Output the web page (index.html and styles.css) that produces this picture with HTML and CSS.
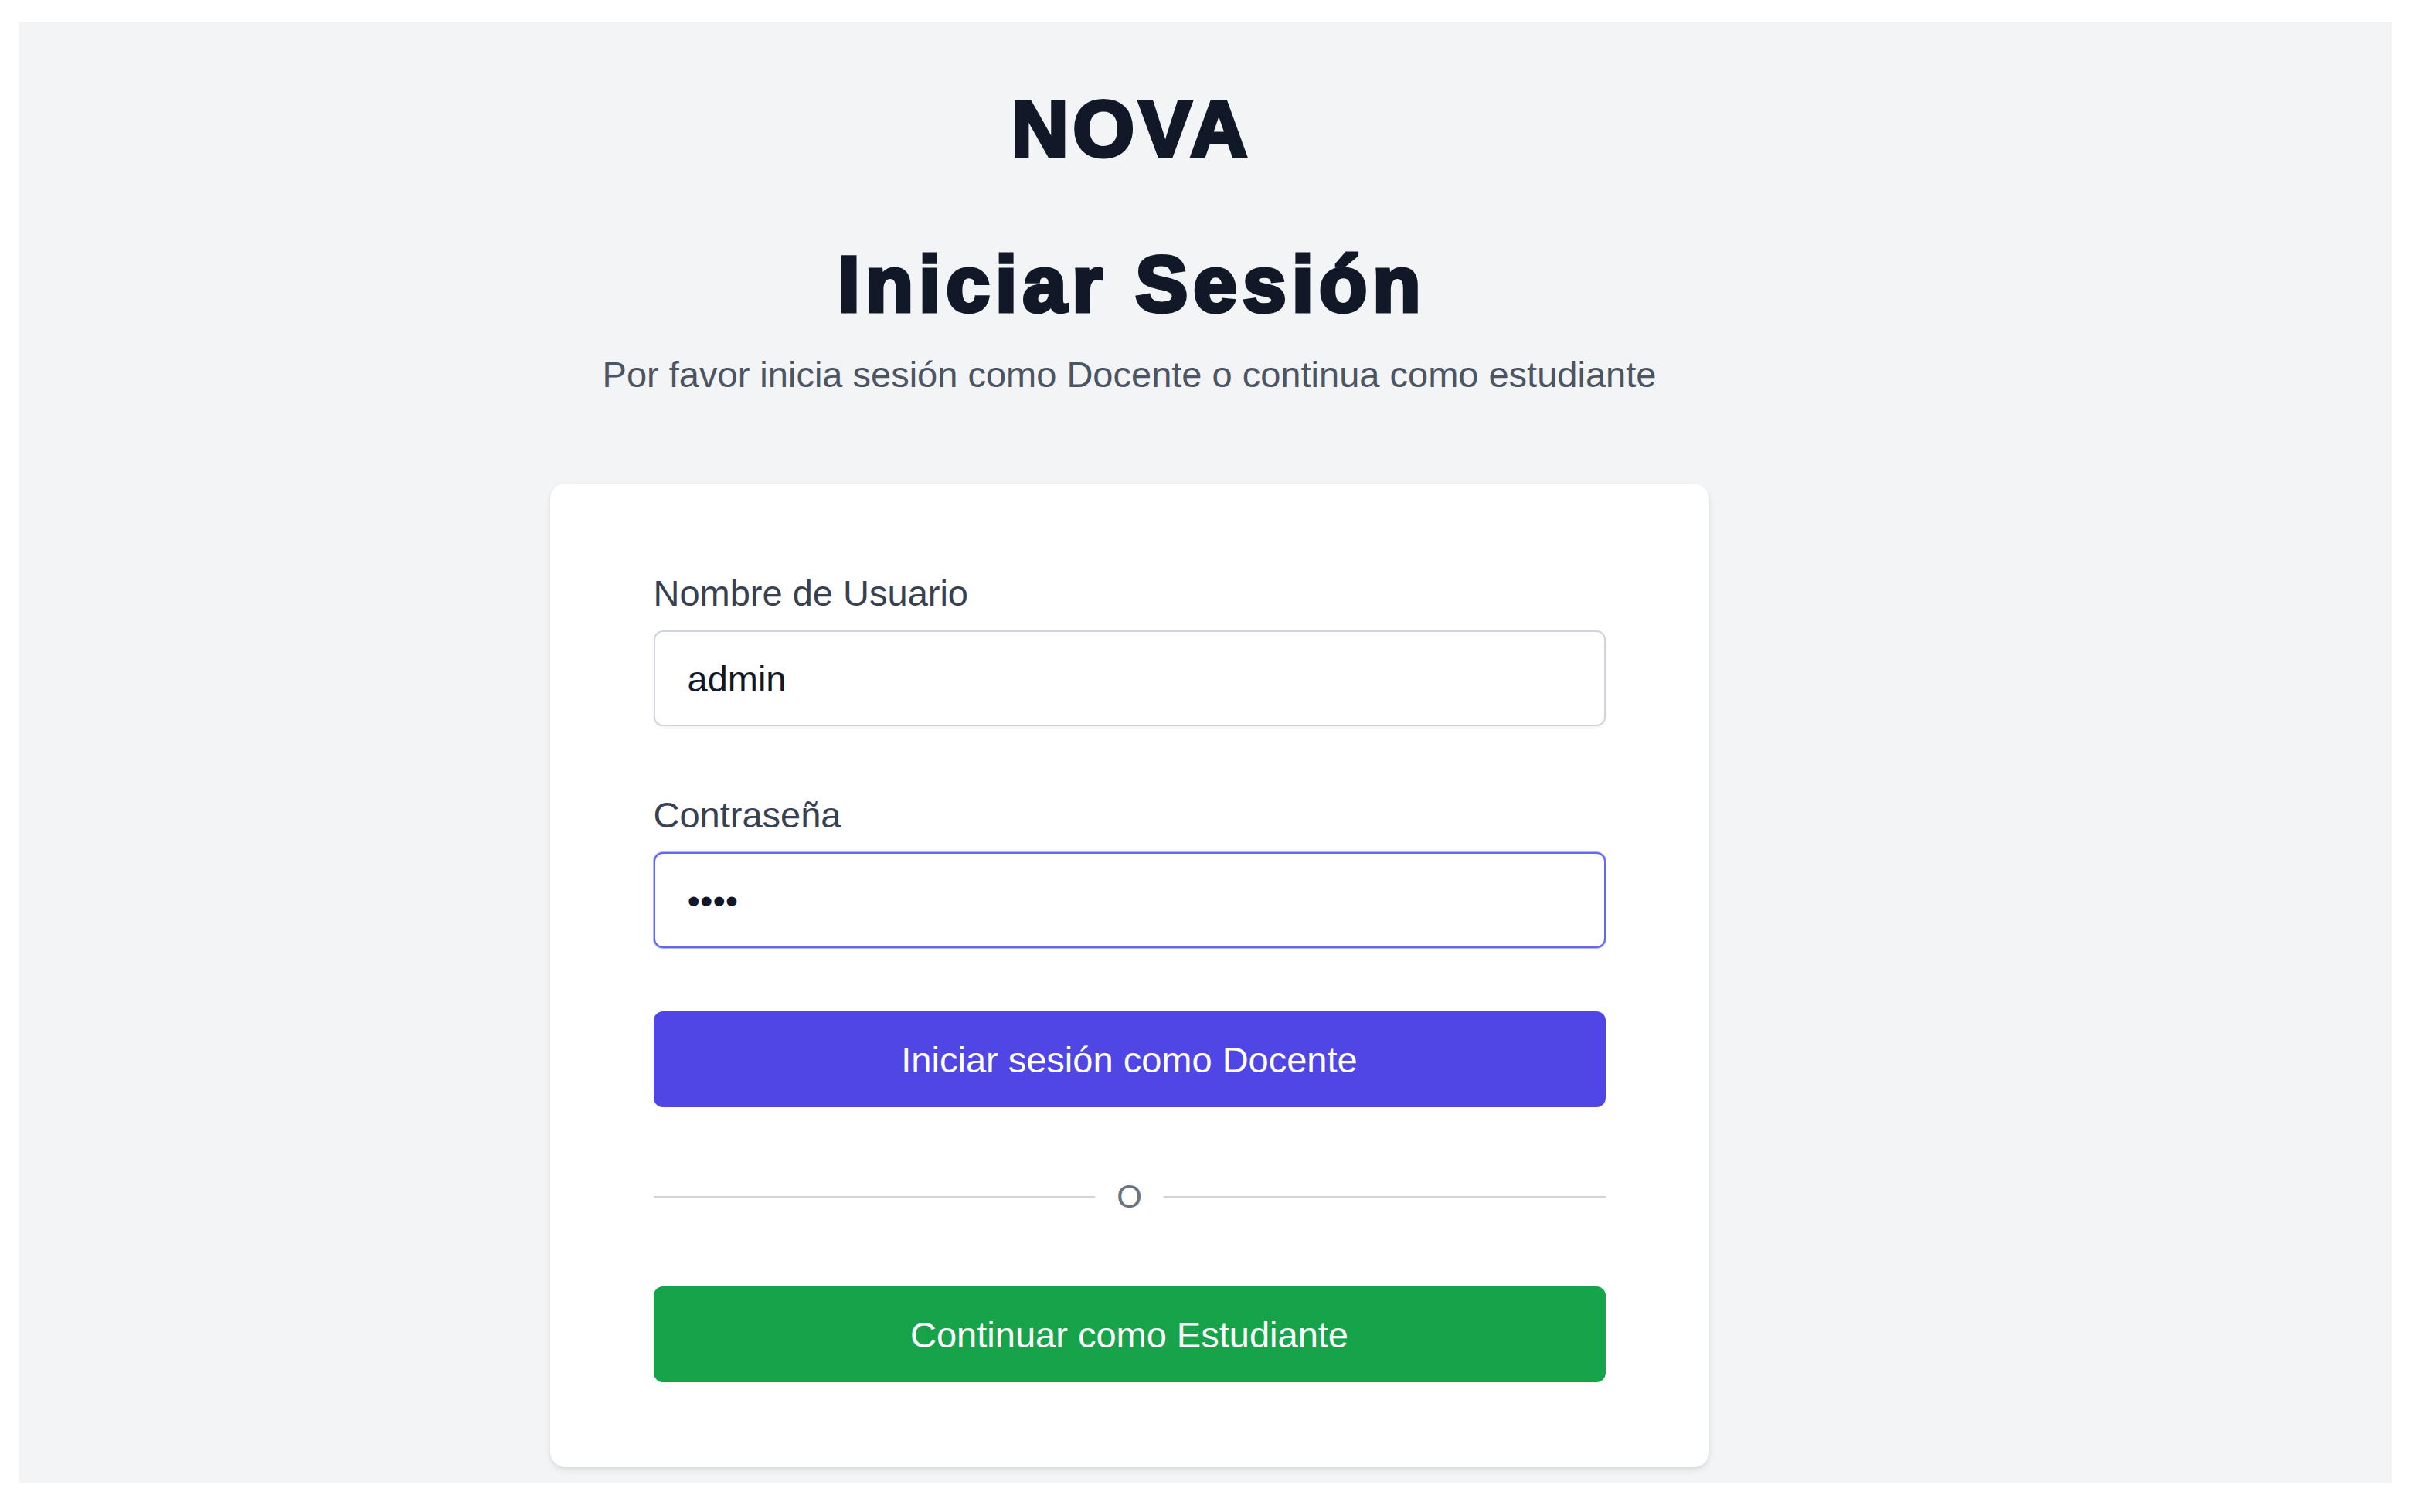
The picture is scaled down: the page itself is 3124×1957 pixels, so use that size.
FILE: index.html
```html
<!DOCTYPE html>
<html lang="es">
<head>
    <meta charset="UTF-8">
    <meta name="viewport" content="width=device-width, initial-scale=1.0">
    <title>NOVA - Iniciar Sesión</title>
    <link rel="stylesheet" href="styles.css">
</head>
<body>
    <div class="page">
        <div class="login-wrapper">
            <h1 class="brand">NOVA</h1>
            <h2 class="login-title">Iniciar Sesión</h2>
            <p class="login-subtitle">Por favor inicia sesión como Docente o continua como estudiante</p>

            <div class="login-card">
                <form id="login-form" class="login-form">
                    <div class="field">
                        <label for="username" class="input-label">Nombre de Usuario</label>
                        <input class="input-field" type="text" id="username" name="username" value="admin" autocomplete="off">
                    </div>
                    <div class="field">
                        <label for="password" class="input-label">Contraseña</label>
                        <input class="input-field input-active" type="password" id="password" name="password" value="1234">
                    </div>
                    <button class="btn btn-teacher" type="submit">Iniciar sesión como Docente</button>
                </form>

                <div class="divider"><span>O</span></div>

                <button class="btn btn-student" type="button">Continuar como Estudiante</button>
            </div>
        </div>
    </div>
</body>
</html>
```

FILE: styles.css
```css
body {
    margin: 0;
    background-color: #fff;
    font-family: "Liberation Sans", Arial, sans-serif;
}

.page {
    box-sizing: border-box;
    height: 1892px;
    margin: 28px 29px 0 24px;
    padding: 88px 196px 0 0; /* content column sits left of the page center */
    background-color: #f3f4f6;
}

.login-wrapper {
    display: flex;
    flex-direction: column;
    align-items: center;
}

.brand,
.login-title {
    margin: 0;
    font-size: 102px;
    line-height: 102px;
    font-weight: 700;
    color: #111827;
    -webkit-text-stroke: 5px #111827; /* heavier than plain bold */
}

.brand {
    letter-spacing: 6px;
    padding-left: 6px;
}

.login-title {
    margin-top: 99px;
    letter-spacing: 7px;
    padding-left: 7px;
}

.login-subtitle {
    margin: 38px 0 0;
    font-size: 47px;
    line-height: 56px;
    color: #4b5563;
}

.login-card {
    box-sizing: border-box;
    width: 1500px;
    margin-top: 113px;
    padding: 114px 134px 110px;
    background-color: #fff;
    border-radius: 20px;
    box-shadow: 0 4px 10px rgba(0, 0, 0, 0.07), 0 2px 4px rgba(0, 0, 0, 0.05);
}

.login-form {
    display: flex;
    flex-direction: column;
}

.field {
    display: flex;
    flex-direction: column;
    gap: 20px;
}

.field + .field {
    margin-top: 87px;
}

.input-label {
    font-size: 47px;
    line-height: 56px;
    color: #374151;
}

.input-field {
    box-sizing: border-box;
    width: 100%;
    height: 124px;
    padding: 0 42px;
    border: 2px solid #d1d5db;
    border-radius: 12px;
    font-family: "Liberation Sans", Arial, sans-serif;
    font-size: 47px;
    color: #111827;
    box-shadow: 0 2px 4px rgba(0, 0, 0, 0.05);
    outline: none;
}

.input-active {
    border-color: #6366f1;
    box-shadow: 0 0 0 1px rgba(99, 102, 241, 0.5);
}

.btn {
    display: block;
    width: 100%;
    height: 124px;
    border: none;
    border-radius: 12px;
    font-family: "Liberation Sans", Arial, sans-serif;
    font-size: 47px;
    color: #fff;
    cursor: pointer;
}

.btn-teacher {
    margin-top: 82px;
    background-color: #4f46e5;
}

.btn-student {
    background-color: #16a34a;
}

.divider {
    display: flex;
    align-items: center;
    height: 56px;
    margin: 88px 0;
}

.divider::before,
.divider::after {
    content: "";
    flex: 1;
    height: 2px;
    background-color: #d1d5db;
}

.divider span {
    padding: 0 28px;
    font-size: 42px;
    line-height: 56px;
    color: #6b7280;
}
```
